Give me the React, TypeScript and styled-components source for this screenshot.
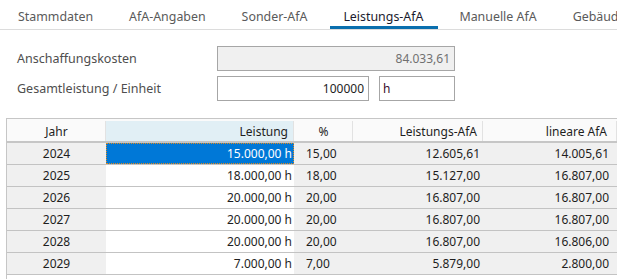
import React from 'react';
import styled, { createGlobalStyle } from 'styled-components';

const GlobalStyle = createGlobalStyle`
  html, body {
    margin: 0;
    padding: 0;
    background: #ffffff;
    overflow: hidden;
  }
  body {
    font-family: "Noto Sans", "Open Sans", sans-serif;
    font-size: 12px;
    color: #1e1e1e;
  }
`;

const tabs = [
  'Stammdaten',
  'AfA-Angaben',
  'Sonder-AfA',
  'Leistungs-AfA',
  'Manuelle AfA',
  'Gebäudeteile',
];
const ACTIVE_TAB = 'Leistungs-AfA';

const rows = [
  { year: '2024', leistung: '15.000,00 h', pct: '15,00', afa: '12.605,61', linear: '14.005,61' },
  { year: '2025', leistung: '18.000,00 h', pct: '18,00', afa: '15.127,00', linear: '16.807,00' },
  { year: '2026', leistung: '20.000,00 h', pct: '20,00', afa: '16.807,00', linear: '16.807,00' },
  { year: '2027', leistung: '20.000,00 h', pct: '20,00', afa: '16.807,00', linear: '16.807,00' },
  { year: '2028', leistung: '20.000,00 h', pct: '20,00', afa: '16.807,00', linear: '16.806,00' },
  { year: '2029', leistung: '7.000,00 h', pct: '7,00', afa: '5.879,00', linear: '2.800,00' },
];

const App = () => {
  return (
    <>
      <GlobalStyle />
      <Page>
        <TabBar>
          {tabs.map((tab) => (
            <Tab key={tab} active={tab === ACTIVE_TAB}>
              {tab}
            </Tab>
          ))}
        </TabBar>

        <Form>
          <FieldRow>
            <Label>Anschaffungskosten</Label>
            <Input readOnly width={238} value="84.033,61" />
          </FieldRow>
          <FieldRow>
            <Label>Gesamtleistung / Einheit</Label>
            <Input width={152} value="100000" />
            <UnitInput width={76} value="h" />
          </FieldRow>
        </Form>

        <Grid>
          <HeaderRow>
            <HeadCell align="center">Jahr</HeadCell>
            <HeadCell align="right" sorted>
              Leistung
            </HeadCell>
            <HeadCell align="center">%</HeadCell>
            <HeadCell align="right">Leistungs-AfA</HeadCell>
            <HeadCell align="right" last>
              lineare AfA
            </HeadCell>
          </HeaderRow>
          {rows.map((row, index) => (
            <DataRow key={row.year}>
              <Cell align="center">{row.year}</Cell>
              <EditCell selected={index === 0}>{row.leistung}</EditCell>
              <Cell align="left" pad={12}>
                {row.pct}
              </Cell>
              <Cell align="right">{row.afa}</Cell>
              <Cell align="right" pad={8}>
                {row.linear}
              </Cell>
            </DataRow>
          ))}
        </Grid>
      </Page>
    </>
  );
};

export default App;

const Page = styled.div`
  width: 617px;
  height: 279px;
  overflow: hidden;
`;

const TabBar = styled.div`
  display: flex;
  height: 29px;
  border-bottom: 1px solid #dcdcdc;
  white-space: nowrap;
`;

const Tab = styled.div<{ active?: boolean }>`
  position: relative;
  flex-shrink: 0;
  box-sizing: border-box;
  padding: 5px 18px 0;
  line-height: 24px;
  height: 29px;
  font-size: 12.4px;
  color: ${(p) => (p.active ? '#1b1b2e' : '#5a5a5a')};
  &::after {
    content: '';
    display: ${(p) => (p.active ? 'block' : 'none')};
    position: absolute;
    left: 5px;
    right: 3px;
    bottom: 0;
    height: 3px;
    background: #0a6fae;
  }
`;

const Form = styled.div`
  display: flex;
  flex-direction: column;
  gap: 5px;
  padding: 16px 0 0 17px;
`;

const FieldRow = styled.div`
  display: flex;
  align-items: center;
  gap: 10px;
`;

const Label = styled.div`
  width: 190px;
  font-size: 12.5px;
  color: #4e4e4e;
`;

const Input = styled.input<{ width: number }>`
  box-sizing: border-box;
  width: ${(p) => p.width}px;
  height: 25px;
  border: 1px solid #a6a6a6;
  padding: 0 4px;
  font-family: inherit;
  font-size: 12px;
  text-align: right;
  color: #1e1e1e;
  background: #ffffff;
  outline: none;
  &:read-only {
    background: #f0f0f0;
    color: #707070;
  }
`;

const UnitInput = styled(Input)`
  text-align: left;
  padding: 0 3px;
  color: #3a0a28;
`;

const Grid = styled.div`
  margin: 17px 0 0 6px;
  border-top: 1px solid #c6c6c6;
  border-left: 1px solid #c6c6c6;
  height: 200px;
`;

const columns = '99px 188px 59px 130px 1fr';

const HeaderRow = styled.div`
  display: grid;
  grid-template-columns: ${columns};
  height: 22px;
  background: #fafafa;
  border-bottom: 2px solid #c6c6c6;
`;

const HeadCell = styled.div<{ align: string; sorted?: boolean; last?: boolean }>`
  display: flex;
  align-items: center;
  justify-content: ${(p) =>
    p.align === 'center' ? 'center' : p.align === 'right' ? 'flex-end' : 'flex-start'};
  padding: 0 ${(p) => (p.last ? 10 : 6)}px 0 6px;
  background: ${(p) => (p.sorted ? '#e1eff5' : 'transparent')};
  box-shadow: inset -1px 0 0 #e2e2e2;
  color: #1e1e1e;
  margin: 2px 0 0;
`;

const DataRow = styled.div`
  display: grid;
  grid-template-columns: ${columns};
  height: 21px;
  background: #f0f0f0;
  border-bottom: 1px solid #c3c3c3;
`;

const Cell = styled.div<{ align: string; pad?: number }>`
  display: flex;
  align-items: center;
  justify-content: ${(p) =>
    p.align === 'center' ? 'center' : p.align === 'right' ? 'flex-end' : 'flex-start'};
  padding: 0 ${(p) => (p.align === 'left' ? 0 : p.pad ?? 3)}px 0
    ${(p) => (p.align === 'left' ? p.pad ?? 3 : 3)}px;
  color: #1e1e1e;
`;

const EditCell = styled.div<{ selected?: boolean }>`
  box-sizing: border-box;
  display: flex;
  align-items: center;
  justify-content: flex-end;
  padding: 0 1px 0 3px;
  background: ${(p) => (p.selected ? '#0078d7' : '#ffffff')};
  color: ${(p) => (p.selected ? '#ffffff' : '#1e1e1e')};
  border: 1px dotted ${(p) => (p.selected ? '#e08a1e' : 'transparent')};
`;
